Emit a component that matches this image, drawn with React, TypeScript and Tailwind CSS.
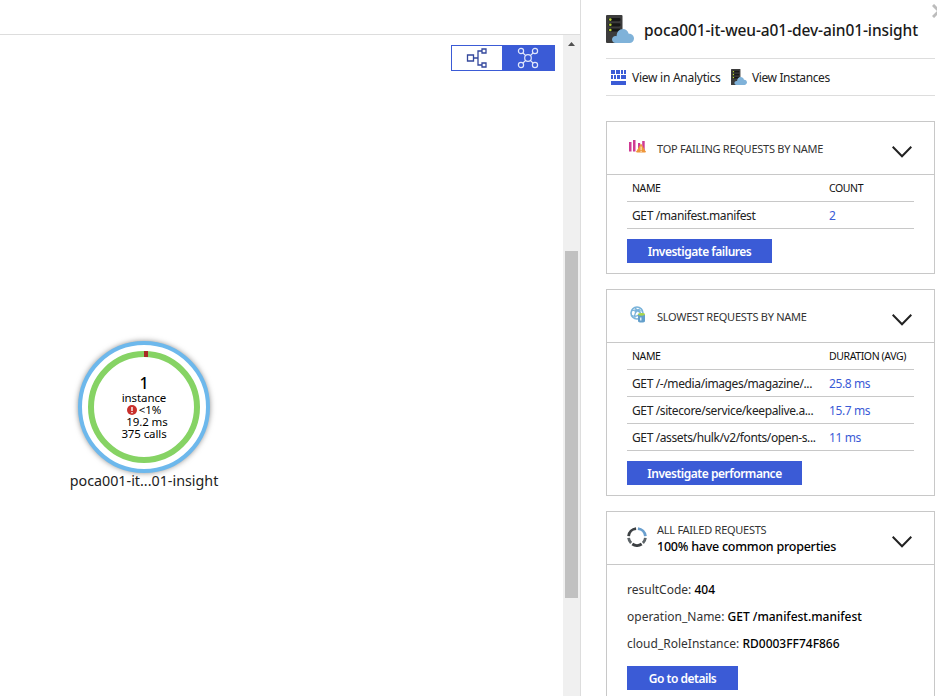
import type { ReactNode } from "react";

function ServerCloud({ size }: { size: number }) {
  return (
    <svg width={size} height={size} viewBox="0 0 28 28" className="block shrink-0">
      <rect x="0" y="0" width="16.5" height="28" rx="1" fill="#3c3c3c" />
      <g fill="#161616">
        <rect x="2.5" y="3" width="12" height="3.2" rx="1.4" />
        <rect x="2.5" y="8.2" width="12" height="3.2" rx="1.4" />
        <rect x="2.5" y="13.4" width="12" height="3.2" rx="1.4" />
      </g>
      <g fill="#b8d432">
        <circle cx="4.3" cy="4.6" r="1.3" />
        <circle cx="4.3" cy="9.8" r="1.3" />
        <circle cx="4.3" cy="15" r="1.3" />
      </g>
      <path
        d="M9.5 28C7.500 28 6 26.500 6 24.600s1.500-3.500 3.600-3.500c.4 0 .7 0 1 .1C10.700 17 13.200 14 16.800 14c2.800 0 5.200 1.900 5.900 4.700C25.700 18.400 28 20.700 28 23.400 28 26 26 28 23.500 28z"
        fill="#7fb2d9"
      />
    </svg>
  );
}

function AnalyticsIcon() {
  return (
    <svg width="15" height="15" viewBox="0 0 15 15" className="block shrink-0" fill="#3b5bd6" shapeRendering="crispEdges">
      <path d="M0 0h4v4H0zM5 0h4v4H5zM10 0h2v4h-2zM13 0h2v4h-2zM0 5h2v4H0zM3 5h2v4H3zM6 5h3v4H6zM10 5h5v4h-5zM0 11h15v4H0z" />
    </svg>
  );
}

function FailuresIcon() {
  return (
    <svg width="18" height="14" viewBox="0 0 18 14" className="relative top-px left-0.5 block">
      <g fill="#cf3a94">
        <rect x="0" y="2" width="2.500" height="9.500" />
        <rect x="4" y="0" width="2.500" height="11.500" />
        <rect x="9" y="3" width="2.200" height="7" />
        <rect x="13.200" y="1" width="2.500" height="10" />
      </g>
      <path d="M12 4.300L16.500 12H7.500z" fill="#ee963a" stroke="#ee963a" strokeLinejoin="round" />
      <path d="M11.500 6.500h1.200v3.500h-1.200zM11.500 10.800h1.200V12h-1.200z" fill="#fbe5c6" />
    </svg>
  );
}

function GlobeIcon() {
  return (
    <svg width="16" height="17" viewBox="0 0 16 17" className="relative left-[3px] block">
      <circle cx="7" cy="7" r="6" fill="#fff" stroke="#79b3da" strokeWidth="1.600" />
      <path d="M1.500 5C5 3 9 5 12.500 9M5 12.500C4 8 6 4 11 2.500M2 9.500c3 1.500 5 1 7-1M5 1.500C6 4 8 5 12.500 5" fill="none" stroke="#79b3da" strokeWidth="1.200" />
      <circle cx="6" cy="5" r="1.600" fill="#79b3da" />
      <path d="M8 8.500h7V15c0 1-1.500 1.600-3.500 1.600S8 16 8 15z" fill="#639fcb" />
      <ellipse cx="11.500" cy="8.300" rx="3.500" ry="1.400" fill="#a9d44a" />
      <path d="M10 11.500h1.500v3H10z" fill="#d9ecf8" />
    </svg>
  );
}

function RingIcon() {
  return (
    <svg width="20" height="20" viewBox="0 0 20 20" className="relative top-px block" fill="none" strokeWidth="2.800">
      <path d="M10.900 1.600A8.400 8.400 0 0 1 18.400 9.100" stroke="#6a9fce" />
      <path d="M18.400 10.900A8.400 8.400 0 0 1 15.900 16" stroke="#5d6468" />
      <path d="M14.700 17A8.400 8.400 0 0 1 5.300 17" stroke="#3c4043" />
      <path d="M4.100 16A8.400 8.400 0 0 1 1.600 10.900" stroke="#5d6468" />
      <path d="M1.600 9.100A8.400 8.400 0 0 1 9.100 1.600" stroke="#3c4043" />
    </svg>
  );
}

function Chevron() {
  return (
    <svg width="20" height="12" viewBox="0 0 20 12" className="block" fill="none" stroke="#222" strokeWidth="2">
      <path d="M.7 .8L10 10.300L19.300 .8" />
    </svg>
  );
}

function Card({ icon, title, height, children }: { icon: ReactNode; title: ReactNode; height: string; children: ReactNode }) {
  return (
    <section className={`${height} w-[329px] shrink-0 border border-[#c8c8c8]`}>
      <header className="flex h-[53px] items-center border-b border-[#c8c8c8] pl-5">
        <div className="w-[30px] pb-1">{icon}</div>
        <div className="flex-1">{title}</div>
        <div className="mt-2 mr-[22px]">
          <Chevron />
        </div>
      </header>
      <div className="px-5">{children}</div>
    </section>
  );
}

function Heading({ children }: { children: ReactNode }) {
  return <h2 className="pt-0.5 text-[11px] leading-4 tracking-[-0.26px] text-[#333]">{children}</h2>;
}

function Button({ children, width }: { children: ReactNode; width: string }) {
  return (
    <button className={`${width} block h-6 bg-[#3b5bd6] pt-0.5 text-center text-[12px] leading-[22px] font-semibold tracking-[-0.48px] text-white`}>
      {children}
    </button>
  );
}

function Table({ valueLabel, rows }: { valueLabel: string; rows: [string, string][] }) {
  return (
    <div className="mb-2.5 w-[287px]">
      <div className="flex h-[27px] items-center border-b border-[#c8c8c8] pt-0.5 pl-[5px] text-[10.5px] tracking-[-0.4px] text-[#111]">
        <span className="w-[197px]">NAME</span>
        <span>{valueLabel}</span>
      </div>
      {rows.map(([name, value]) => (
        <div key={name} className="flex h-[27px] items-center border-b border-[#c8c8c8] pt-0.5 pl-[5px] text-[12px] tracking-[-0.38px] whitespace-nowrap text-[#222]">
          <span className="w-[197px]">{name}</span>
          <span className="text-[#3b5bd6]">{value}</span>
        </div>
      ))}
    </div>
  );
}

function Property({ name, value }: { name: string; value: string }) {
  return (
    <div className="h-[27px] text-[12px] leading-[27px] whitespace-nowrap text-[#333]">
      {name}: <span className="font-medium text-black">{value}</span>
    </div>
  );
}

function MapNode() {
  return (
    <div className="absolute top-[304px] left-[64px] w-[160px]">
      <svg width="160" height="136" viewBox="0 0 160 136" className="block overflow-visible">
        <circle cx="80" cy="68" r="65" fill="#fff" className="drop-shadow-[0_0_3px_rgba(0,0,0,0.6)]" />
        <circle cx="80" cy="68" r="64" fill="#fff" stroke="#6db8ec" strokeWidth="4" />
        <circle cx="80" cy="68" r="53" fill="none" stroke="#86d364" strokeWidth="6" />
        <rect x="80" y="12" width="4" height="6" fill="#a92a25" />
      </svg>
      <div className="absolute top-[36px] left-0 w-[160px] text-center text-[11.5px] leading-3 tracking-[-0.1px] text-black">
        <div className="text-[16px] leading-[17px] font-medium">1</div>
        <div>instance</div>
        <div className="flex items-center justify-center gap-0.5">
          <svg width="10" height="10" viewBox="0 0 10 10">
            <circle cx="5" cy="5" r="5" fill="#c9302c" />
            <path d="M4.300 2h1.400v4H4.300zM4.300 7h1.400v1.300H4.300z" fill="#fff" />
          </svg>
          &lt;1%
        </div>
        <div className="pl-1.5">19.2 ms</div>
        <div>375 calls</div>
      </div>
      <div className="-mt-1 text-center text-[14.3px] leading-5 whitespace-nowrap text-[#222]">poca001-it...01-insight</div>
    </div>
  );
}

function ViewToggle() {
  return (
    <div className="absolute top-2.5 left-[451px] flex h-[26px] w-[104px] border border-[#3b5bd6]">
      <div className="flex w-[50px] shrink-0 items-center justify-center bg-white">
        <svg width="22" height="20" viewBox="0 0 22 20" fill="none" stroke="#33479c" strokeWidth="1.300">
          <path d="M1.500 7h6v6h-6zM7.500 10H12M16 3h-4v14h4M16 1h4v4h-4zM16 15h4v4h-4z" />
        </svg>
      </div>
      <div className="flex flex-1 items-center justify-center bg-[#3b5bd6]">
        <svg width="22" height="22" viewBox="0 0 22 22" fill="none" stroke="#e1e7fb" strokeWidth="1.200">
          <circle cx="11" cy="11" r="3.300" />
          <circle cx="4" cy="4" r="2.600" />
          <circle cx="18" cy="4" r="2.600" />
          <circle cx="4" cy="18" r="2.600" />
          <circle cx="18" cy="18" r="2.600" />
          <path d="M6 6l2.700 2.700M16 6l-2.700 2.700M6 16l2.700-2.700M16 16l-2.700-2.700" />
        </svg>
      </div>
    </div>
  );
}

export default function App() {
  return (
    <div className="flex h-[696px] w-[937px] overflow-hidden bg-white font-['Noto_Sans',sans-serif]">
      <main className="flex w-[581px] flex-col border-r border-[#ddd]">
        <div className="h-[35px] shrink-0 border-b border-[#ddd]" />
        <div className="relative flex flex-1">
          <div className="flex-1" />
          <ViewToggle />
          <MapNode />
          <div className="flex w-[17px] flex-col bg-[#f0f0f0] pl-0.5">
            <svg width="13" height="16" viewBox="0 0 13 16" className="block">
              <path d="M3 11L6.500 7L10 11z" fill="#505050" />
            </svg>
            <div className="mt-[200px] h-[347px] w-[13px] bg-[#c1c1c1]" />
          </div>
        </div>
      </main>

      <aside className="relative flex flex-1 flex-col pl-[25px]">
        <svg width="14" height="14" viewBox="0 0 14 14" className="absolute top-1 left-[351px]" stroke="#bcbcbc" strokeWidth="3">
          <path d="M1 1L13 13M13 1L1 13" />
        </svg>
        <div className="flex h-[59px] w-[329px] shrink-0 items-center border-b border-[#ddd]">
          <ServerCloud size={28} />
          <h1 className="ml-2.5 pt-1 text-[15.5px] font-medium tracking-[-0.1px] whitespace-nowrap text-[#1a1a1a]">poca001-it-weu-a01-dev-ain01-insight</h1>
        </div>
        <nav className="flex h-[37px] w-[329px] shrink-0 items-center border-b border-[#ddd] pl-[5px] text-[12px] whitespace-nowrap text-[#222]">
          <AnalyticsIcon />
          <span className="ml-1.5 w-[99px] pt-0.5 tracking-[-0.26px]">View in Analytics</span>
          <ServerCloud size={16} />
          <span className="ml-[5px] pt-0.5 tracking-[-0.4px]">View Instances</span>
        </nav>

        <div className="mt-[25px] flex flex-col gap-[15px]">
          <Card height="h-[153px]" icon={<FailuresIcon />} title={<Heading>TOP FAILING REQUESTS BY NAME</Heading>}>
            <Table valueLabel="COUNT" rows={[["GET /manifest.manifest", "2"]]} />
            <Button width="w-[145px]">Investigate failures</Button>
          </Card>

          <Card height="h-[207px]" icon={<GlobeIcon />} title={<Heading>SLOWEST REQUESTS BY NAME</Heading>}>
            <Table
              valueLabel="DURATION (AVG)"
              rows={[
                ["GET /-/media/images/magazine/...", "25.8 ms"],
                ["GET /sitecore/service/keepalive.a...", "15.7 ms"],
                ["GET /assets/hulk/v2/fonts/open-s...", "11 ms"],
              ]}
            />
            <Button width="w-[175px]">Investigate performance</Button>
          </Card>

          <Card
            height="h-[200px]"
            icon={<RingIcon />}
            title={
              <div className="-mt-px">
                <Heading>ALL FAILED REQUESTS</Heading>
                <p className="pt-px text-[12.5px] leading-4 font-medium tracking-[-0.24px] text-black">100% have common properties</p>
              </div>
            }
          >
            <div className="pt-[11px] pb-[9px]">
              <Property name="resultCode" value="404" />
              <Property name="operation_Name" value="GET /manifest.manifest" />
              <Property name="cloud_RoleInstance" value="RD0003FF74F866" />
            </div>
            <Button width="w-[111px]">Go to details</Button>
          </Card>
        </div>
      </aside>
    </div>
  );
}
